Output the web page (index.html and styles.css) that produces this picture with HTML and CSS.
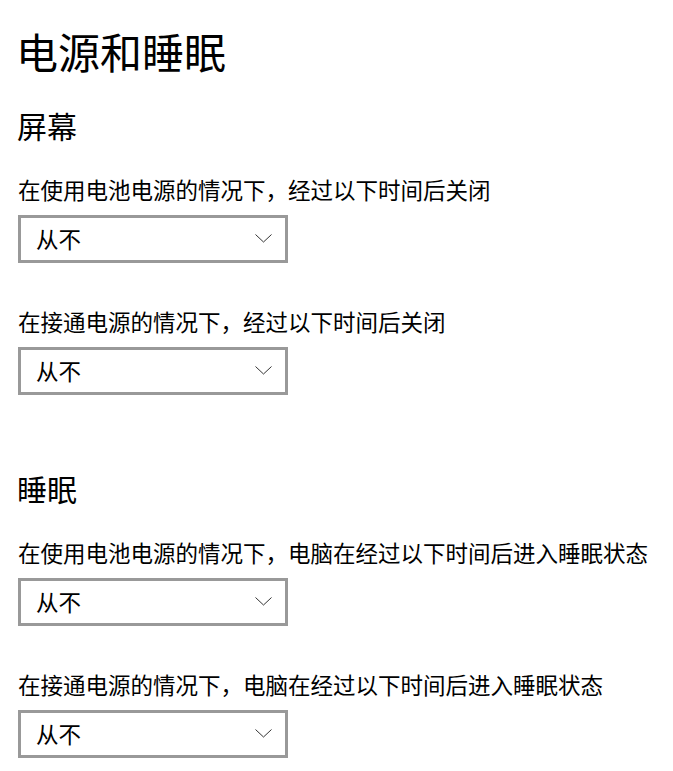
FILE: index.html
```html
<!DOCTYPE html>
<html lang="zh-CN">
<head>
    <meta charset="UTF-8">
    <title>电源和睡眠</title>
    <link rel="stylesheet" href="styles.css">
</head>
<body>

    <div class="settings-page">
        <h1 class="page-title">电源和睡眠</h1>

        <section class="group">
            <h2 class="group-title">屏幕</h2>

            <div class="setting">
                <label class="setting-label">在使用电池电源的情况下，经过以下时间后关闭</label>
                <div class="combo">
                    <span class="combo-value">从不</span>
                    <svg class="combo-arrow" width="17" height="9" viewBox="0 0 17 9">
                        <polyline points="0.5,0.5 8.5,8 16.5,0.5" fill="none" stroke="#333" stroke-width="1"/>
                    </svg>
                </div>
            </div>

            <div class="setting">
                <label class="setting-label">在接通电源的情况下，经过以下时间后关闭</label>
                <div class="combo">
                    <span class="combo-value">从不</span>
                    <svg class="combo-arrow" width="17" height="9" viewBox="0 0 17 9">
                        <polyline points="0.5,0.5 8.5,8 16.5,0.5" fill="none" stroke="#333" stroke-width="1"/>
                    </svg>
                </div>
            </div>
        </section>

        <section class="group">
            <h2 class="group-title">睡眠</h2>

            <div class="setting">
                <label class="setting-label">在使用电池电源的情况下，电脑在经过以下时间后进入睡眠状态</label>
                <div class="combo">
                    <span class="combo-value">从不</span>
                    <svg class="combo-arrow" width="17" height="9" viewBox="0 0 17 9">
                        <polyline points="0.5,0.5 8.5,8 16.5,0.5" fill="none" stroke="#333" stroke-width="1"/>
                    </svg>
                </div>
            </div>

            <div class="setting">
                <label class="setting-label">在接通电源的情况下，电脑在经过以下时间后进入睡眠状态</label>
                <div class="combo">
                    <span class="combo-value">从不</span>
                    <svg class="combo-arrow" width="17" height="9" viewBox="0 0 17 9">
                        <polyline points="0.5,0.5 8.5,8 16.5,0.5" fill="none" stroke="#333" stroke-width="1"/>
                    </svg>
                </div>
            </div>
        </section>
    </div>

</body>
</html>
```

FILE: styles.css
```css
*, *::before, *::after {
    box-sizing: border-box;
    margin: 0;
    padding: 0;
}

html, body {
    background: #ffffff;
    color: #000000;
    font-family: "Noto Sans CJK SC", "Microsoft YaHei", sans-serif;
}

.settings-page {
    padding: 21px 18px 0 18px;
}

.page-title {
    font-size: 42px;
    font-weight: 400;
    line-height: 60px;
    margin-left: -2px;
}

.group {
    display: flex;
    flex-direction: column;
    gap: 43px;
    margin-top: 24px;
}

.group + .group {
    margin-top: 73px;
}

.group-title {
    font-size: 30px;
    font-weight: 400;
    line-height: 40px;
    margin-left: -1px;
    margin-bottom: -14px; /* label sits 29px under the group title */
}

.setting {
    display: flex;
    flex-direction: column;
    gap: 11px;
}

.setting-label {
    font-size: 22.5px;
    line-height: 30px;
}

.combo {
    width: 270px;
    height: 48px;
    border: 3px solid #999999;
    background: #ffffff;
    display: flex;
    align-items: center;
    justify-content: space-between;
    padding: 0 13px 2px 15px;
}

.combo-value {
    font-size: 22.5px;
    line-height: 30px;
}

.combo-arrow {
    display: block;
    margin-top: 1px;
}
```
